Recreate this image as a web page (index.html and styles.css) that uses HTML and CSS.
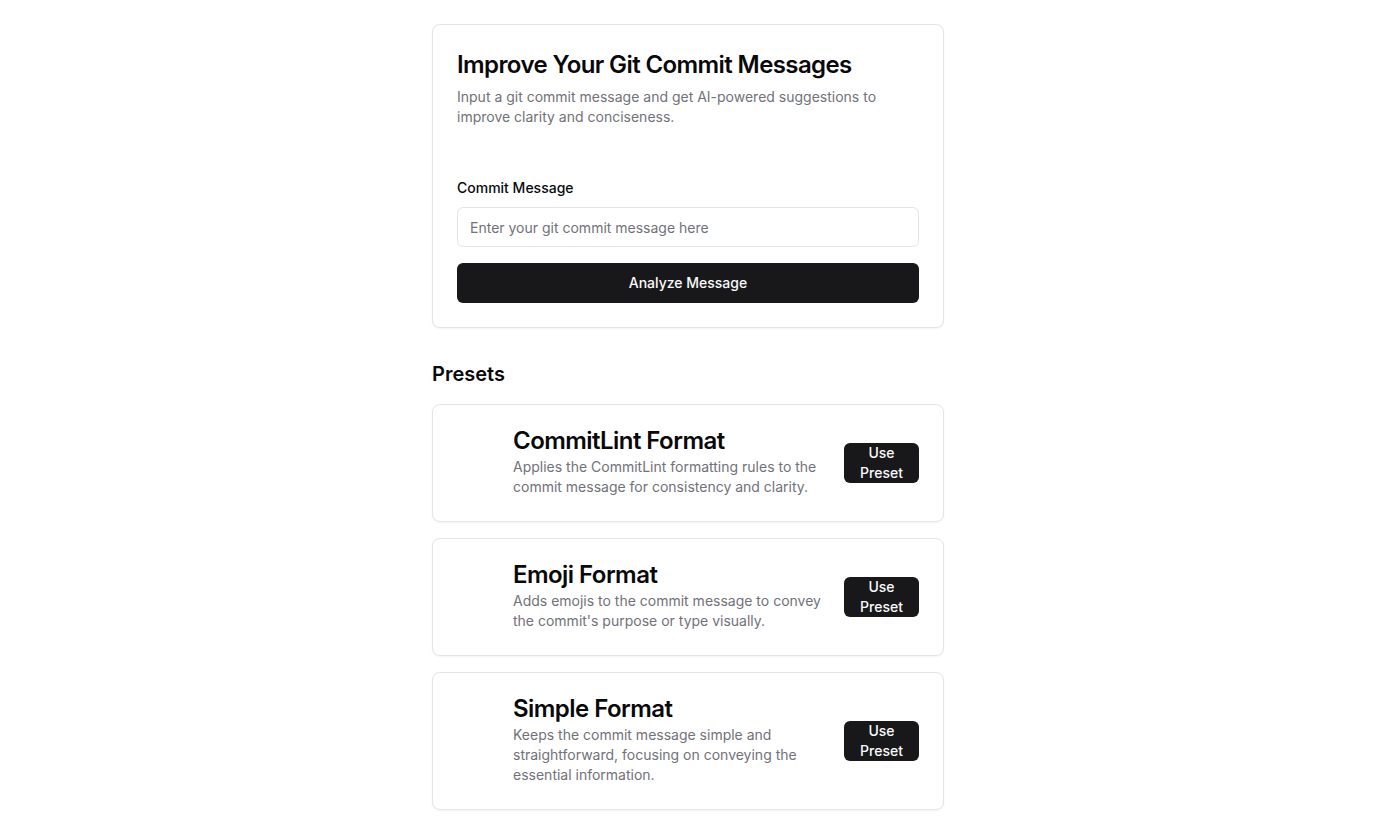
FILE: index.html
```html
<!DOCTYPE html>
<html lang="en">
<head>
    <meta charset="UTF-8">
    <title>Commit Message Improver</title>
    <link rel="stylesheet" href="styles.css">
</head>
<body>
<main class="page">
    <section class="card">
        <div class="card-header">
            <h1 class="card-title">Improve Your Git Commit Messages</h1>
            <p class="card-desc">Input a git commit message and get AI-powered suggestions to improve clarity and conciseness.</p>
        </div>
        <form class="card-content" onsubmit="return false">
            <label class="field-label" for="message">Commit Message</label>
            <input class="field-input" type="text" id="message" placeholder="Enter your git commit message here">
            <button class="btn btn-full" type="submit">Analyze Message</button>
        </form>
    </section>

    <h2 class="section-title">Presets</h2>

    <div class="preset-list">
        <div class="preset">
            <div class="preset-thumb"></div>
            <div class="preset-body">
                <h3 class="preset-title">CommitLint Format</h3>
                <p class="preset-desc">Applies the CommitLint formatting rules to the commit message for consistency and clarity.</p>
            </div>
            <button class="btn btn-preset">Use Preset</button>
        </div>
        <div class="preset">
            <div class="preset-thumb"></div>
            <div class="preset-body">
                <h3 class="preset-title">Emoji Format</h3>
                <p class="preset-desc">Adds emojis to the commit message to convey the commit's purpose or type visually.</p>
            </div>
            <button class="btn btn-preset">Use Preset</button>
        </div>
        <div class="preset">
            <div class="preset-thumb"></div>
            <div class="preset-body">
                <h3 class="preset-title">Simple Format</h3>
                <p class="preset-desc">Keeps the commit message simple and straightforward, focusing on conveying the essential information.</p>
            </div>
            <button class="btn btn-preset">Use Preset</button>
        </div>
    </div>
</main>
</body>
</html>
```

FILE: styles.css
```css
body {
    margin: 0;
    font-family: Inter, "Noto Sans", sans-serif;
    color: #09090b;
    background: #fff;
}

.page {
    width: 512px;
    margin: 0 auto;
    padding: 24px 0;
}

.card {
    border: 1px solid #e4e4e7;
    border-radius: 8px;
    box-shadow: 0 1px 2px rgba(0, 0, 0, 0.05);
    background: #fff;
}

.card-header {
    padding: 24px;
    display: flex;
    flex-direction: column;
    gap: 6px;
}

.card-title {
    margin: 0;
    font-size: 24px;
    line-height: 32px;
    font-weight: 600;
    letter-spacing: -0.6px;
}

.card-desc {
    margin: 0;
    font-size: 14px;
    line-height: 20px;
    color: #71717a;
}

.card-content {
    padding: 30px 24px 24px;
    display: flex;
    flex-direction: column;
}

.field-label {
    font-size: 14px;
    line-height: 14px;
    font-weight: 500;
    margin-bottom: 12px;
}

.field-input {
    height: 40px;
    box-sizing: border-box;
    border: 1px solid #e4e4e7;
    border-radius: 6px;
    padding: 8px 12px;
    font-family: inherit;
    font-size: 14px;
    color: #09090b;
    margin-bottom: 16px;
}

.field-input::placeholder {
    color: #71717a;
}

.btn {
    background: #18181b;
    color: #fafafa;
    border: none;
    border-radius: 6px;
    font-family: inherit;
    font-size: 14px;
    line-height: 20px;
    font-weight: 500;
    cursor: pointer;
}

.btn-full {
    height: 40px;
}

.section-title {
    margin: 32px 0 16px;
    font-size: 20px;
    line-height: 28px;
    font-weight: 600;
}

.preset-list {
    display: flex;
    flex-direction: column;
    gap: 16px;
}

.preset {
    border: 1px solid #e4e4e7;
    border-radius: 8px;
    box-shadow: 0 1px 2px rgba(0, 0, 0, 0.05);
    padding: 24px;
    display: flex;
    align-items: center;
    gap: 16px;
}

.preset-thumb {
    width: 40px;
    flex-shrink: 0;
}

.preset-body {
    flex: 1;
    display: flex;
    flex-direction: column;
    gap: 4px;
}

.preset-title {
    margin: 0;
    font-size: 24px;
    line-height: 24px;
    font-weight: 600;
    letter-spacing: -0.55px;
}

.preset-desc {
    margin: 0;
    font-size: 14px;
    line-height: 20px;
    color: #71717a;
}

.btn-preset {
    width: 75px;
    height: 40px;
    padding: 0 16px;
    flex-shrink: 0;
}
```
